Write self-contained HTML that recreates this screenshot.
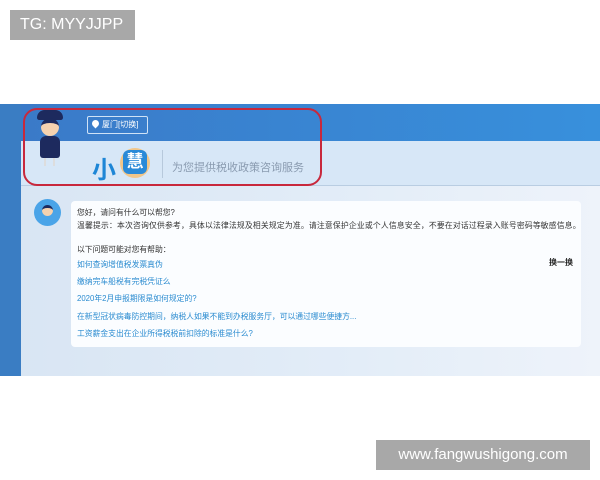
<!DOCTYPE html>
<html><head><meta charset="utf-8"><style>
*{margin:0;padding:0;box-sizing:border-box}
body{width:600px;height:480px;background:#fff;position:relative;overflow:hidden;font-family:"Liberation Sans","Noto Sans CJK SC",sans-serif}
.abs{position:absolute}
.t{font-size:7.8px;color:#333;white-space:nowrap}
.l{font-size:7.8px;color:#2a8bd0;white-space:nowrap}
</style></head><body>
<div class="abs" style="left:10px;top:10px;width:125px;height:30px;background:#a8a8a8;color:#fff;font-size:16px;line-height:30px;padding-left:10px">TG: MYYJJPP</div>

<div class="abs" style="left:0;top:104px;width:600px;height:272px;background:linear-gradient(90deg,#d8e5f3,#e3edf8 60%,#eef3fa)"></div>
<div class="abs" style="left:0;top:104px;width:21px;height:272px;background:#3a7dc3"></div>
<div class="abs" style="left:21px;top:104px;width:579px;height:37px;background:linear-gradient(90deg,#3a7ac8,#3890dc)"></div>
<div class="abs" style="left:21px;top:141px;width:579px;height:45px;background:#d7e7f7;border-bottom:1px solid #b9cde2"></div>

<!-- girl -->
<div class="abs" style="left:37px;top:110px;width:26px;height:10px;background:#1d2a5e;border-radius:10px 10px 3px 3px"></div>
<div class="abs" style="left:41px;top:118px;width:18px;height:18px;background:#f5d2b0;border-radius:50%;border-top:5px solid #1d2a5e"></div>
<div class="abs" style="left:40px;top:136px;width:20px;height:22px;background:#1d2a5e;border-radius:6px 6px 3px 3px"></div>
<div class="abs" style="left:44px;top:158px;width:2px;height:8px;background:#ddd"></div>
<div class="abs" style="left:53px;top:158px;width:2px;height:8px;background:#ddd"></div>

<div class="abs" style="left:87px;top:116px;width:61px;height:18px;border:1px solid #cfe2f6;border-radius:2px;color:#fff;font-size:8px;line-height:16px;padding-left:14px">厦门[切换]</div>
<div class="abs" style="left:92px;top:120px;width:7px;height:7px;background:#fff;border-radius:50% 50% 50% 0;transform:rotate(-45deg)"></div>

<div class="abs" style="left:92px;top:150px;font-size:24px;font-weight:bold;color:#1e86d6">小</div>
<div class="abs" style="left:120px;top:148px;width:30px;height:30px;background:#f1c68a;border-radius:50%"></div>
<div class="abs" style="left:123px;top:150px;width:24px;height:24px;background:#2a8ad8;border-radius:6px;color:#fff;font-size:17px;font-weight:bold;line-height:24px;text-align:center">慧</div>
<div class="abs" style="left:162px;top:150px;width:1px;height:28px;background:#b7c9dc"></div>
<div class="abs" style="left:172px;top:159px;font-size:11px;color:#8a9bb0">为您提供税收政策咨询服务</div>

<div class="abs" style="left:23px;top:108px;width:299px;height:78px;border:2.5px solid #c8283c;border-radius:14px"></div>

<div class="abs" style="left:34px;top:199px;width:27px;height:27px;background:#4aa4e8;border-radius:50%"></div>
<div class="abs" style="left:42px;top:205px;width:11px;height:11px;background:#f5d2b0;border-radius:50%;border-top:3px solid #1d2a5e"></div>

<div class="abs" style="left:71px;top:201px;width:510px;height:146px;background:#fbfdff;border-radius:4px"></div>
<div class="abs t" style="left:77px;top:207px">您好，请问有什么可以帮您?</div>
<div class="abs t" style="left:77px;top:220px;letter-spacing:0.2px">温馨提示：本次咨询仅供参考，具体以法律法规及相关规定为准。请注意保护企业或个人信息安全，不要在对话过程录入账号密码等敏感信息。</div>
<div class="abs t" style="left:77px;top:244px">以下问题可能对您有帮助：</div>
<div class="abs" style="left:549px;top:257px;font-size:8px;color:#222;font-weight:bold">换一换</div>
<div class="abs l" style="left:77px;top:259px">如何查询增值税发票真伪</div>
<div class="abs l" style="left:77px;top:276px">缴纳完车船税有完税凭证么</div>
<div class="abs l" style="left:77px;top:293px">2020年2月申报期限是如何规定的?</div>
<div class="abs l" style="left:77px;top:311px">在新型冠状病毒防控期间，纳税人如果不能到办税服务厅，可以通过哪些便捷方...</div>
<div class="abs l" style="left:77px;top:328px">工资薪金支出在企业所得税税前扣除的标准是什么?</div>

<div class="abs" style="left:376px;top:440px;width:214px;height:30px;background:#a8a8a8;color:#fff;font-size:15px;line-height:30px;text-align:center">www.fangwushigong.com</div>
</body></html>
